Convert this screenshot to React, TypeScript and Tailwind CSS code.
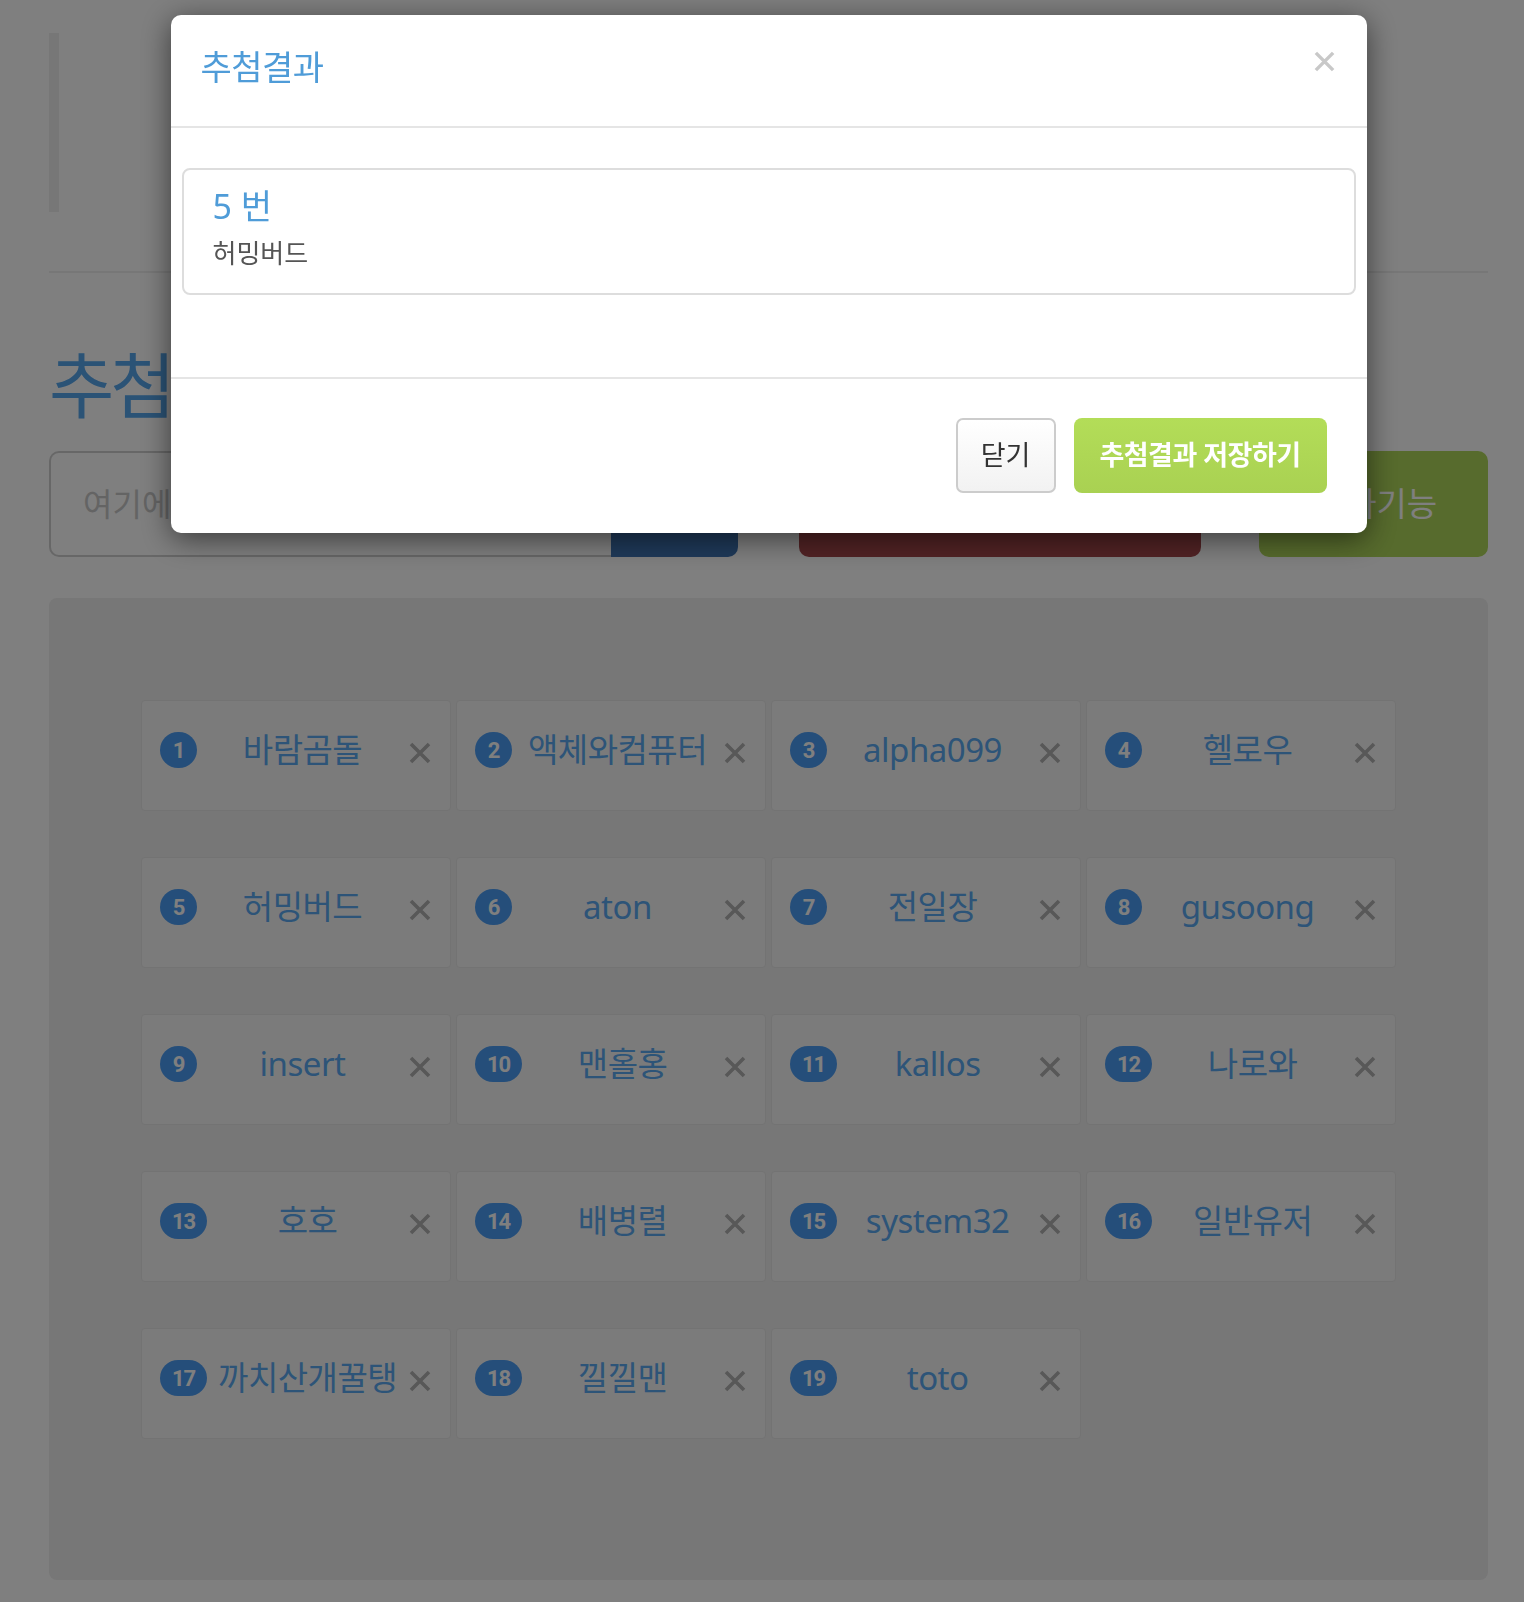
import React from 'react';

interface Entry {
  no: number;
  name: string;
}

const entries: Entry[] = [
  { no: 1, name: '바람곰돌' },
  { no: 2, name: '액체와컴퓨터' },
  { no: 3, name: 'alpha099' },
  { no: 4, name: '헬로우' },
  { no: 5, name: '허밍버드' },
  { no: 6, name: 'aton' },
  { no: 7, name: '전일장' },
  { no: 8, name: 'gusoong' },
  { no: 9, name: 'insert' },
  { no: 10, name: '맨홀홍' },
  { no: 11, name: 'kallos' },
  { no: 12, name: '나로와' },
  { no: 13, name: '호호' },
  { no: 14, name: '배병렬' },
  { no: 15, name: 'system32' },
  { no: 16, name: '일반유저' },
  { no: 17, name: '까치산개꿀탱' },
  { no: 18, name: '낄낄맨' },
  { no: 19, name: 'toto' },
];

const CrossIcon = ({ className }: { className?: string }) => (
  <svg viewBox="0 0 24 22" className={className} fill="none" stroke="currentColor" strokeWidth={3.6}>
    <path d="M3 2 L21 20 M21 2 L3 20" />
  </svg>
);

const EntryCard = ({ no, name }: Entry) => (
  <div className="h-[111px] rounded-[4px] border border-[#e6e6e6] bg-[#f7f7f7] px-[18px] pt-[31px]">
    <div className="flex h-[36px] items-center">
      <span className="flex h-[36px] min-w-[37px] shrink-0 items-center justify-center rounded-full bg-[#4a9cf4] px-[12px] font-['Roboto',sans-serif] text-[22px] font-bold tracking-[-1px] text-white">
        {no}
      </span>
      <span className="flex-1 whitespace-nowrap text-center text-[33px] leading-[36px] tracking-[-0.5px] text-[#5aa9f0]">
        {name}
      </span>
      <CrossIcon className="mt-[5px] h-[22px] w-[24px] shrink-0 text-[#b0b0b0]" />
    </div>
  </div>
);

export default function App() {
  return (
    <div className="relative min-h-[1602px] bg-white font-['Noto_Sans','Noto_Sans_CJK_KR',sans-serif]">
      {/* page under the backdrop */}
      <div className="pl-[49px] pr-[36px] pb-[22px]">
        <div className="mt-[33px] h-[179px] w-[10px] bg-[#eeeeee]" />
        <div className="mt-[59px] h-[2px] bg-[#eeeeee]" />
        <h1 className="mt-[80px] h-[64px] text-[71px] leading-[64px] tracking-[-4px] text-[#56a6ec]">
          추첨기
        </h1>
        <div className="mt-[34px] flex h-[106px] items-stretch">
          <div className="flex w-[689px]">
            <div className="flex flex-1 items-center rounded-l-[10px] border-2 border-r-0 border-[#cecece] bg-white pl-[32px] text-[32px] text-[#c8c8c8]">
              여기에 이름을 입력하세요
            </div>
            <button className="w-[127px] rounded-r-[10px] bg-[#3e74b4] text-[30px] text-white">추가</button>
          </div>
          <button className="ml-[61px] w-[402px] rounded-[10px] bg-[#a4464a] text-[30px] text-white">추첨하기</button>
          <button className="ml-[58px] w-[229px] rounded-[10px] bg-[#aed65a] pl-[6px] text-[33px] text-white">추가기능</button>
        </div>
        <div className="mt-[41px] h-[982px] rounded-[8px] bg-[#eeeeee] pl-[92px] pt-[102px]">
          <div className="grid w-[1255px] grid-cols-4 gap-x-[5px] gap-y-[46px]">
            {entries.map((e) => (
              <EntryCard key={e.no} {...e} />
            ))}
          </div>
        </div>
      </div>

      {/* backdrop + modal */}
      <div className="fixed inset-0 bg-black/50 pl-[49px] pr-[36px] pt-[15px]">
        <div className="mx-auto w-[1196px] rounded-[10px] bg-white shadow-[0_6px_30px_rgba(0,0,0,0.55)]">
          <div className="flex h-[113px] items-start justify-between border-b-2 border-[#e5e5e5] pl-[30px] pr-[31px] pt-[31px]">
            <h4 className="text-[34px] leading-[42px] tracking-[-0.5px] text-[#4f9cd8]">추첨결과</h4>
            <CrossIcon className="mt-[4px] h-[23px] w-[23px] text-[#c8c8c8]" />
          </div>
          <div className="px-[11px] pb-[82px] pt-[40px]">
            <div className="h-[127px] rounded-[8px] border-2 border-[#dddddd] px-[29px] pt-[16px]">
              <div className="text-[34px] leading-[40px] text-[#4f9cd8]">5 번</div>
              <div className="mt-[12px] text-[26px] leading-[30px] text-[#555555]">허밍버드</div>
            </div>
          </div>
          <div className="flex justify-end gap-[18px] border-t-2 border-[#e5e5e5] px-[40px] pb-[40px] pt-[39px]">
            <button className="h-[75px] w-[100px] rounded-[7px] border-2 border-[#cccccc] bg-gradient-to-b from-white to-[#f2f2f2] text-[27px] text-[#333333]">
              닫기
            </button>
            <button className="h-[75px] w-[253px] rounded-[8px] bg-gradient-to-b from-[#b3dd58] to-[#a9d152] text-[27px] font-semibold tracking-[-0.5px] text-white">
              추첨결과 저장하기
            </button>
          </div>
        </div>
      </div>
    </div>
  );
}
